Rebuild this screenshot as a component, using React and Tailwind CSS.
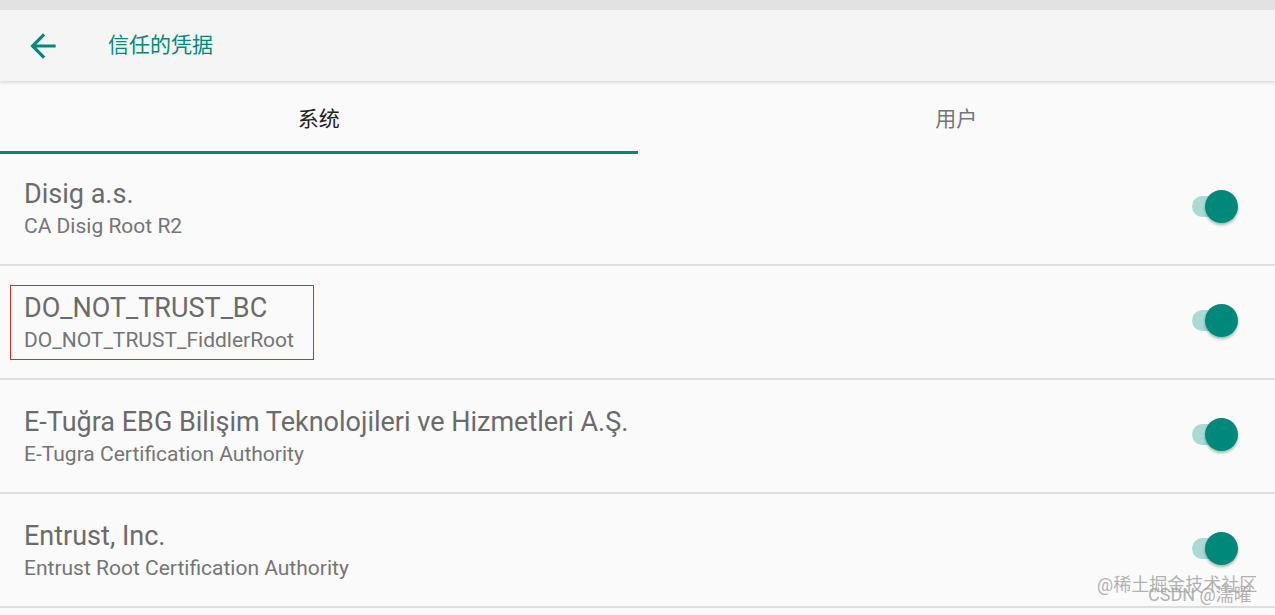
const certs = [
  { org: 'Disig a.s.', name: 'CA Disig Root R2' },
  { org: 'DO_NOT_TRUST_BC', name: 'DO_NOT_TRUST_FiddlerRoot', marked: true },
  { org: 'E-Tuğra EBG Bilişim Teknolojileri ve Hizmetleri A.Ş.', name: 'E-Tugra Certification Authority' },
  { org: 'Entrust, Inc.', name: 'Entrust Root Certification Authority' },
]

const font = "font-['Roboto','Noto_Sans_CJK_SC',sans-serif]"

function Toggle() {
  return (
    <div className="flex items-center">
      <div className="h-[21px] w-[44px] rounded-full bg-[#a9dad3]" />
      <div className="-ml-[31px] h-[33px] w-[33px] rounded-full bg-[#00897b] shadow-[0_2px_3px_rgba(0,0,0,0.3)]" />
    </div>
  )
}

function CertRow({ org, name, marked, first }) {
  return (
    <div
      className={`flex items-start justify-between border-b-2 border-[#dedede] pl-[24px] pr-[37px] ${
        first ? 'h-[112px] pt-[23px]' : 'h-[114px] pt-[25px]'
      }`}
    >
      <div className="relative">
        {marked ? (
          <div className="absolute -left-[14px] -top-[6px] h-[75px] w-[304px] border border-[#d32f2f]" />
        ) : null}
        <div className="text-[27px] leading-[34px] text-[#6b6b6b]">{org}</div>
        <div className="text-[21px] leading-[30px] text-[#757575]">{name}</div>
      </div>
      <div className="mt-[13px]">
        <Toggle />
      </div>
    </div>
  )
}

export default function App() {
  return (
    <div className={`relative h-[615px] w-[1275px] overflow-hidden bg-[#fafafa] ${font}`}>
      <div className="h-[10px] bg-[#e2e2e2]" />
      <div className="relative z-10 flex h-[71px] items-center bg-[#f5f5f5] shadow-[0_2px_3px_rgba(0,0,0,0.12)]">
        <svg viewBox="0 0 24 24" className="ml-[24px] h-[38px] w-[38px] fill-[#00897b]">
          <path d="M20 11H7.83l5.59-5.59L12 4l-8 8 8 8 1.41-1.41L7.83 13H20v-2z" />
        </svg>
        <span className="ml-[46px] text-[21px] text-[#00897b]">信任的凭据</span>
      </div>
      <div className="flex h-[73px]">
        <div className="flex flex-1 items-center justify-center border-b-[3px] border-[#00897b] pt-[7px] text-[21px] text-[#222]">
          系统
        </div>
        <div className="flex flex-1 items-center justify-center pt-[4px] text-[21px] text-[#757575]">
          用户
        </div>
      </div>
      {certs.map((c, i) => (
        <CertRow key={c.org} {...c} first={i === 0} />
      ))}
      <div className="absolute left-[1097px] top-[574px] text-[18px] leading-[22px] text-[#9e9e9e]/80">
        @稀土掘金技术社区
      </div>
      <div className="absolute left-[1148px] top-[584px] text-[18px] leading-[22px] text-[#9e9e9e]/80">
        CSDN @濡曜
      </div>
    </div>
  )
}
